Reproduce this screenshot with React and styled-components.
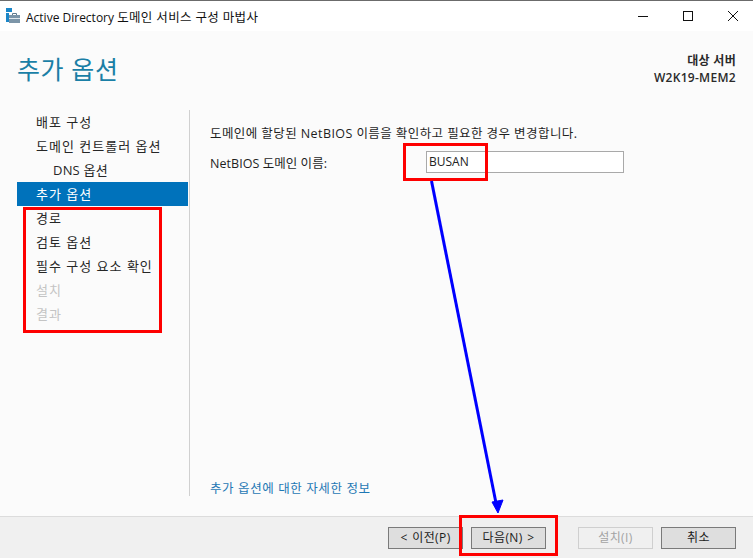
import styled, { createGlobalStyle } from 'styled-components';

const Global = createGlobalStyle`
  html, body { margin: 0; padding: 0; }
  body { width: 753px; height: 558px; overflow: hidden; background: #fbfbfb; }
`;

const Wizard = styled.div`
  position: relative;
  width: 753px;
  height: 558px;
  display: flex;
  flex-direction: column;
  overflow: hidden;
  font-family: "Open Sans", "Noto Sans CJK KR", sans-serif;
  font-size: 12px;
  color: #1e1e1e;
`;

const TitleBar = styled.div`
  height: 30px;
  flex: none;
  display: flex;
  align-items: center;
  background: #fff;
  border-top: 1px solid #6b6b6b;
  padding-left: 6px;
`;

const TitleText = styled.span`
  margin-left: 4px;
  color: #111;
`;

const TitleKo = styled.span`
  font-size: 12.5px;
  letter-spacing: 0.35px;
`;

const WindowButtons = styled.div`
  margin-left: auto;
  margin-right: -2px;
  padding-bottom: 1px;
  display: flex;
  height: 100%;
  box-sizing: border-box;
`;

const WindowButton = styled.div`
  width: 45px;
  display: flex;
  align-items: center;
  justify-content: center;
`;

const Header = styled.div`
  height: 79px;
  flex: none;
  display: flex;
  justify-content: space-between;
  padding: 0 17px;
`;

const PageTitle = styled.h1`
  margin: 21px 0 0;
  font-size: 25px;
  font-weight: 400;
  line-height: 34px;
  letter-spacing: 0.6px;
  color: #1a7fa6;
`;

const Target = styled.div`
  margin-top: 21px;
  text-align: right;
  font-weight: 600;
  line-height: 17px;
  letter-spacing: 0.3px;
  color: #2a2a2a;
`;

const Body = styled.div`
  flex: 1;
  display: flex;
  min-height: 0;
  padding-left: 17px;
`;

const Nav = styled.ul`
  width: 172px;
  height: 386px;
  margin: 0;
  padding: 0;
  list-style: none;
  border-right: 1px solid #d0d0d0;
`;

const NavItem = styled.li`
  height: 24px;
  line-height: 25px;
  width: 171px;
  padding-left: ${(props) => (props.$sub ? 36 : 19)}px;
  box-sizing: border-box;
  overflow: hidden;
  background: ${(props) => (props.$active ? '#0072bb' : 'transparent')};
  color: ${(props) => (props.$active ? '#fff' : props.$off ? '#c4c4c4' : '#262626')};
  font-size: 13px;
  letter-spacing: ${(props) => (props.$sub ? 0.2 : 1)}px;
`;

const Content = styled.div`
  flex: 1;
  height: 386px;
  display: flex;
  flex-direction: column;
  padding: 15px 0 0 20px;
  box-sizing: border-box;
`;

const Line = styled.div`
  line-height: 18px;
  font-size: 12.5px;
  letter-spacing: 0.42px;
`;

const Field = styled.div`
  display: flex;
  align-items: center;
  padding-top: 8px;
`;

const FieldLabel = styled.label`
  width: 216px;
  font-size: 12.5px;
  letter-spacing: 0.05px;
`;

const TextBox = styled.div`
  width: 198px;
  height: 22px;
  box-sizing: border-box;
  border: 1px solid #a9a9a9;
  background: #fff;
  padding-left: 2px;
  line-height: 20px;
  color: #222;
`;

const MoreLink = styled.a`
  margin-top: auto;
  height: 18px;
  line-height: 22px;
  font-size: 12.5px;
  color: #1f78b4;
  letter-spacing: 0.6px;
`;

const Footer = styled.div`
  height: 42px;
  flex: none;
  display: flex;
  align-items: flex-start;
  padding: 10px 17px 0 388px;
  box-sizing: border-box;
  background: #f0f0f0;
  border-top: 1px solid #dcdcdc;
`;

const Button = styled.button`
  width: 75px;
  height: 22px;
  padding: 0;
  margin-left: ${(props) => props.$gap || 0}px;
  box-sizing: border-box;
  border: 1px solid ${(props) => (props.disabled ? '#cfcfcf' : '#7a7a7a')};
  background: ${(props) => (props.disabled ? '#f0f0f0' : '#dedede')};
  color: ${(props) => (props.disabled ? '#a3a3a3' : '#1c1c1c')};
  font: inherit;
  letter-spacing: 0.4px;
  word-spacing: 1px;
  line-height: 20px;
`;

const RedBox = styled.div`
  position: absolute;
  left: ${(props) => props.$x}px;
  top: ${(props) => props.$y}px;
  width: ${(props) => props.$w}px;
  height: ${(props) => props.$h}px;
  box-sizing: border-box;
  border: 3px solid #fe0000;
`;

const ArrowLayer = styled.svg`
  position: absolute;
  left: 0;
  top: 0;
`;

const AppIcon = () => (
  <svg width="16" height="16" viewBox="0 0 16 16">
    <rect x="0" y="0" width="6" height="4" fill="#1a86c8" />
    <rect x="0" y="5" width="3" height="9" fill="#1a86c8" />
    <rect x="3" y="7" width="11" height="8" fill="#7c95a8" />
    <rect x="3" y="10" width="11" height="1" fill="#dfe7ec" />
    <path d="M6.5 7V5.5h4V7" fill="none" stroke="#5f7a8e" strokeWidth="1" />
  </svg>
);

const steps = [
  { label: '배포 구성' },
  { label: '도메인 컨트롤러 옵션' },
  { label: 'DNS 옵션', sub: true },
  { label: '추가 옵션', active: true },
  { label: '경로' },
  { label: '검토 옵션' },
  { label: '필수 구성 요소 확인' },
  { label: '설치', off: true },
  { label: '결과', off: true },
];

const App = () => (
  <Wizard>
    <Global />
    <TitleBar>
      <AppIcon />
      <TitleText>
        Active Directory <TitleKo>도메인 서비스 구성 마법사</TitleKo>
      </TitleText>
      <WindowButtons>
        <WindowButton>
          <svg width="10" height="10" viewBox="0 0 10 10"><path d="M0 5.5h10" stroke="#111" /></svg>
        </WindowButton>
        <WindowButton>
          <svg width="10" height="10" viewBox="0 0 10 10"><rect x="0.5" y="0.5" width="9" height="9" fill="none" stroke="#111" /></svg>
        </WindowButton>
        <WindowButton>
          <svg width="10" height="10" viewBox="0 0 10 10"><path d="M0 0l10 10M10 0L0 10" stroke="#111" /></svg>
        </WindowButton>
      </WindowButtons>
    </TitleBar>

    <Header>
      <PageTitle>추가 옵션</PageTitle>
      <Target>
        대상 서버
        <br />
        W2K19-MEM2
      </Target>
    </Header>

    <Body>
      <Nav>
        {steps.map((s) => (
          <NavItem key={s.label} $sub={s.sub} $active={s.active} $off={s.off}>
            {s.label}
          </NavItem>
        ))}
      </Nav>
      <Content>
        <Line>도메인에 할당된 NetBIOS 이름을 확인하고 필요한 경우 변경합니다.</Line>
        <Field>
          <FieldLabel>NetBIOS 도메인 이름:</FieldLabel>
          <TextBox>BUSAN</TextBox>
        </Field>
        <MoreLink>추가 옵션에 대한 자세한 정보</MoreLink>
      </Content>
    </Body>

    <Footer>
      <Button>&lt; 이전(P)</Button>
      <Button $gap={8}>다음(N) &gt;</Button>
      <Button $gap={32} disabled>설치(I)</Button>
      <Button $gap={8}>취소</Button>
    </Footer>

    <RedBox $x={23} $y={207} $w={139} $h={126} />
    <RedBox $x={403} $y={143} $w={85} $h={38} />
    <RedBox $x={459} $y={515} $w={99} $h={41} />
    <ArrowLayer width="753" height="558" viewBox="0 0 753 558">
      <path d="M431.5 181L496 503" stroke="#0000ff" strokeWidth="3" fill="none" />
      <path d="M492 502L503 500L498 513Z" fill="#0000ff" stroke="#0000ff" />
    </ArrowLayer>
  </Wizard>
);

export default App;
